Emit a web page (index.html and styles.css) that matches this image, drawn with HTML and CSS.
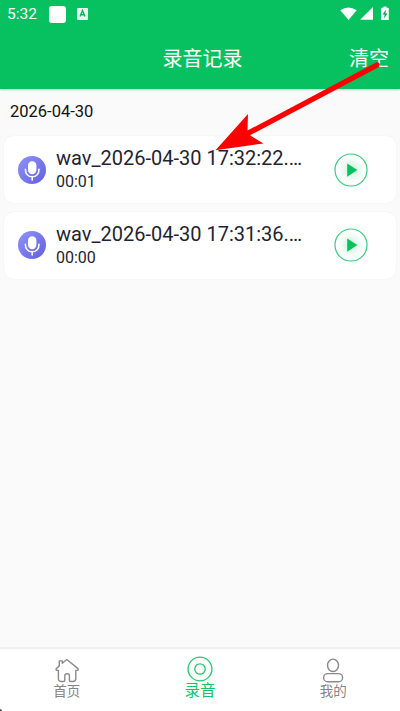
FILE: index.html
```html
<!DOCTYPE html>
<html lang="zh-CN">
<head>
<meta charset="utf-8">
<meta name="viewport" content="width=device-width, initial-scale=1">
<title>录音记录</title>
<link rel="stylesheet" href="styles.css">
</head>
<body>
<svg class="defs" width="0" height="0" aria-hidden="true">
  <defs>
    <linearGradient id="violet" x1="0" y1="0" x2="1" y2="1"><stop offset="0" stop-color="#8f94fb"/><stop offset="1" stop-color="#635edf"/></linearGradient>
    <radialGradient id="glow"><stop offset="0" stop-color="#07c160" stop-opacity=".22"/><stop offset="1" stop-color="#07c160" stop-opacity="0"/></radialGradient>
    <symbol id="mic" viewBox="0 0 28 28">
      <circle cx="14" cy="14" r="14" fill="url(#violet)"/>
      <rect x="10" y="5.3" width="8.4" height="13" rx="4.2" fill="#fff"/>
      <path d="M7.4 13.2c0 4.8 2.8 7.6 6.8 7.6s6.8-2.8 6.8-7.6M14.2 20.8v3.2" fill="none" stroke="#fff" stroke-width="1.6" stroke-linecap="round"/>
    </symbol>
    <symbol id="play" viewBox="0 0 34 34">
      <circle cx="17" cy="17" r="16" fill="#fff" stroke="#39cb7b" stroke-width="1.2"/>
      <circle cx="17" cy="17" r="13" fill="url(#glow)"/>
      <path d="M13.2 10.4 23.4 17 13.2 23.8z" fill="#07c160"/>
    </symbol>
  </defs>
</svg>
<div class="screen">
  <header class="header">
    <div class="status">
      <span class="clock">5:32</span>
      <i class="tile"></i>
      <svg class="badge" width="11" height="12" viewBox="0 0 11 12"><rect width="11" height="12" rx="1" fill="#e9faf0"/><path d="M3 8.6 5.5 2.6 8 8.6M3.8 6.8h3.4" fill="none" stroke="#08b65b" stroke-width="1.4"/></svg>
      <svg class="signals" width="52" height="16" viewBox="0 0 52 16" fill="#fff">
        <path d="M.3 4.3Q8.300-1.500 16.700 4.300L8.500 14z"/>
        <path d="M33 1v12.800H20.200z"/>
        <path d="M43.500.4h3v1.300h1.600q.7 0 .7.700v11q0 .7-.7.700h-6.300q-.7 0-.7-.700v-11q0-.7.700-.700h1.700z"/>
        <path d="M46 3.500 42.500 8.500h2.100l-.5 4 3.500-5h-2.200z" fill="#08a653"/>
      </svg>
    </div>
    <div class="titlebar"><h1>录音记录</h1><span class="clear">清空</span></div>
  </header>
  <main class="content">
    <h2 class="date">2026-04-30</h2>
    <article class="card">
      <svg class="mic"><use href="#mic"/></svg>
      <div class="info"><div class="name">wav_2026-04-30 17:32:22.wav</div><div class="time">00:01</div></div>
      <svg class="play"><use href="#play"/></svg>
    </article>
    <article class="card">
      <svg class="mic"><use href="#mic"/></svg>
      <div class="info"><div class="name">wav_2026-04-30 17:31:36.wav</div><div class="time">00:00</div></div>
      <svg class="play"><use href="#play"/></svg>
    </article>
  </main>
  <nav class="tabs">
    <div class="tab">
      <svg width="26" height="26" viewBox="0 0 26 26" fill="none" stroke="#8a8a8a" stroke-width="1.4" stroke-linejoin="round"><path d="M2.300 11.600 5.300 9V3.900h3v2.400L12.800 2.500 24 11.600q.7 1.400-.7 1.800h-1.500v8.200q0 2.900-2.900 2.900h-2.200q-1.300 0-1.300-1.300v-4.400q0-2-2.300-2t-2.300 2v4.400q0 1.300-1.300 1.300H7.300q-2.900 0-2.900-2.900v-8.200H3q-1.500-.4-.7-1.800z"/></svg>
      <span>首页</span>
    </div>
    <div class="tab active">
      <svg width="26" height="26" viewBox="0 0 26 26" fill="none" stroke="#22c871" stroke-width="1.300"><circle cx="13" cy="13" r="11.900"/><circle cx="13" cy="13" r="5.200"/></svg>
      <span>录音</span>
    </div>
    <div class="tab">
      <svg width="26" height="26" viewBox="0 0 26 26" fill="none" stroke="#8a8a8a" stroke-width="1.400"><ellipse cx="13" cy="8.300" rx="5.500" ry="6.200"/><rect x="3.600" y="16.600" width="19" height="8.200" rx="4.100"/></svg>
      <span>我的</span>
    </div>
  </nav>
  <svg class="arrow" width="170" height="96" viewBox="212 58 170 96"><path d="M215.500 150.300 248 114 247.500 130.600 376.500 62.200Q379.500 61.800 379.900 64.600L379 67 250 135.300 263.400 143.500z" fill="#f00"/></svg>
  <i class="corner"></i>
</div>
</body>
</html>
```
FILE: styles.css
```css
* { box-sizing: border-box; }
body { margin: 0; font-family: Roboto, "Noto Sans CJK SC", sans-serif; }
h1, h2 { margin: 0; font-weight: 400; }
.defs { position: absolute; }
.screen {
  position: relative;
  display: flex;
  flex-direction: column;
  width: 400px;
  height: 711px;
  overflow: hidden;
  background: #fafafa;
}
.header {
  height: 89px;
  color: #fff;
  background: #07c160;
  box-shadow: 0 1px 2px rgba(0, 0, 0, .2);
}
.status {
  display: flex;
  align-items: center;
  height: 28px;
  padding: 0 8px 0 7px;
}
.clock { width: 42px; font-size: 15.500px; }
.tile { width: 17px; height: 17px; border-radius: 3px; background: #fff; }
.badge { margin-left: 11px; }
.signals { margin-left: auto; }
.titlebar {
  display: grid;
  grid-template-columns: 1fr auto 1fr;
  align-items: center;
  height: 61px;
  padding-right: 11px;
}
.titlebar h1 { grid-column: 2; font-size: 20px; line-height: 30px; margin-left: 16px; }
.titlebar h1, .clear { white-space: nowrap; }
.clear { justify-self: end; font-size: 20px; line-height: 30px; }
.content { flex: 1; padding: 0 4px; }
.date { height: 47px; padding-left: 6px; font-size: 16.500px; line-height: 45px; color: #111; }
.card {
  display: flex;
  align-items: center;
  height: 67px;
  margin-bottom: 8.500px;
  padding: 0 28px 0 14px;
  border-radius: 9px;
  background: #fff;
  box-shadow: 0 0 1px rgba(0, 0, 0, .13);
}
.mic { width: 28px; height: 28px; flex: none; }
.info { width: 260px; margin-left: 10px; color: #1f2430; }
.name {
  overflow: hidden;
  font-size: 20px;
  line-height: 25px;
  white-space: nowrap;
  text-overflow: ellipsis;
}
.time { font-size: 16px; line-height: 22px; }
.play { width: 34px; height: 34px; margin-left: auto; flex: none; }
.tabs {
  display: grid;
  grid-template-columns: repeat(3, 1fr);
  height: 64px;
  border-top: 2px solid #f0f0f0;
  background: #fff;
}
.tab {
  display: flex;
  flex-direction: column;
  align-items: center;
  padding-top: 8px;
  font-size: 13.500px;
  line-height: 16px;
  color: #858585;
}
.tab.active { padding-top: 7px; font-size: 15.500px; line-height: 18px; color: #10c566; }
.arrow { position: absolute; left: 212px; top: 58px; }
.corner { position: absolute; left: -2px; bottom: -2px; width: 4px; height: 4px; border-radius: 50%; background: #555; }
```
